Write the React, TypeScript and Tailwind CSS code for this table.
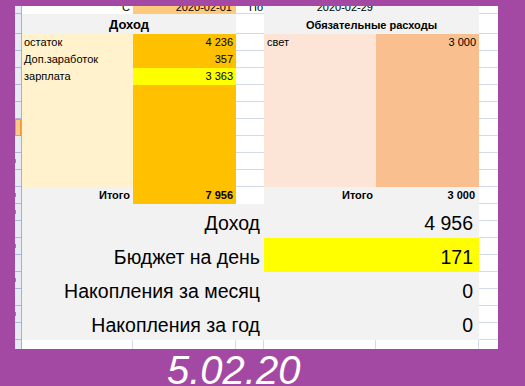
import React from "react";

const G = "border-[#d4dbe8]";

function RowHeader() {
  const rows: number[] = [];
  for (let i = 0; i < 18; i++) rows.push(i);
  return (
    <div className="w-[7px] h-full bg-[#e8eaf4] border-r border-[#9fb4d0] flex flex-col">
      <div className="h-[8px] border-b border-[#a9bbd4] shrink-0" />
      <div className="h-[20px] border-b border-[#a9bbd4] shrink-0" />
      {rows.map((i) =>
        i === 5 ? (
          <div key={i} className="h-[17px] shrink-0 bg-[#fcc98a] border border-[#f29a3a]" />
        ) : (
          <div key={i} className="h-[17px] shrink-0 border-b border-[#a9bbd4] relative">
            {(i === 7 || i === 9 || i === 10 || i === 12 || i === 14 || i === 16) && (
              <div className="absolute left-0 top-[6px] w-[1px] h-[4px] bg-[#5b8ee6]" />
            )}
          </div>
        )
      )}
      <div className="h-[9px] shrink-0" />
    </div>
  );
}

function DataRow({
  label,
  value,
  valueBg,
  right,
  rightValue,
}: {
  label?: string;
  value?: string;
  valueBg?: string;
  right?: string;
  rightValue?: string;
}) {
  return (
    <div className="flex h-[17px] text-[11px] leading-[17px] text-black">
      <div className="w-[111px] bg-[#fff2cc] pl-[2px] whitespace-nowrap">{label}</div>
      <div className={`w-[103px] ${valueBg === "y" ? "bg-[#ffff00]" : "bg-[#ffc000]"} pr-[3px] text-right`}>{value}</div>
      <div className={`w-[28px] bg-white border-b ${G}`} />
      <div className="w-[112px] bg-[#fce4d6] pl-[3px]">{right}</div>
      <div className="w-[103px] bg-[#fabf8f] pr-[3px] text-right">{rightValue}</div>
      <div className={`w-[19px] bg-white border-b ${G}`} />
    </div>
  );
}

function BigRow({ label, value, yellow }: { label: string; value: string; yellow?: boolean }) {
  return (
    <div className="flex h-[34px] text-[19.5px] leading-[22px] text-black">
      <div className="w-[242px] bg-[#f2f2f2] flex items-end justify-end pr-[4px] pb-[4px] whitespace-nowrap">
        {label}
      </div>
      <div
        className={`w-[215px] ${yellow ? "bg-[#ffff00]" : "bg-[#f2f2f2]"} flex items-end justify-end pr-[6px] pb-[4px]`}
      >
        {value}
      </div>
      <div className="w-[19px] bg-white flex flex-col">
        <div className={`h-[17px] border-b ${G}`} />
        <div className={`h-[17px] border-b ${G}`} />
      </div>
    </div>
  );
}

export default function App() {
  const empties: number[] = [0, 1, 2, 3, 4, 5];
  return (
    <div className="w-[525px] h-[386px] bg-[#a349a4] overflow-hidden flex flex-col font-['Liberation_Sans',Arial,sans-serif]">
      <div className="mt-[6px] ml-[15px] w-[483px] h-[343px] bg-white flex shrink-0">
        <RowHeader />
        <div className="w-[476px] flex flex-col">
          {/* row 1 */}
          <div className="flex h-[8px] text-[11px] leading-[11px] text-black overflow-hidden">
            <div className="w-[111px] bg-white flex items-end justify-end pr-[3px] pb-[1px]">С</div>
            <div className="w-[103px] bg-[#fdc97c] flex items-end justify-end pr-[4px] pb-[1px]">2020-02-01</div>
            <div className={`w-[28px] bg-white border-b ${G} flex items-end justify-end pr-[1px]`}>По</div>
            <div className="w-[112px] bg-[#f2f2f2] flex items-end justify-end pr-[3px] pb-[1px]">2020-02-29</div>
            <div className="w-[103px] bg-[#f2f2f2]" />
            <div className={`w-[19px] bg-white border-b ${G}`} />
          </div>
          {/* row 2 headers */}
          <div className="flex h-[20px] text-black font-bold">
            <div className="w-[214px] bg-[#f2f2f2] flex items-end justify-center pb-[2px] text-[13px] leading-[15px]">
              Доход
            </div>
            <div className={`w-[28px] bg-white border-b ${G}`} />
            <div className="w-[215px] bg-[#f2f2f2] flex items-end justify-center pb-[2px] text-[11px] leading-[13px]">
              Обязательные расходы
            </div>
            <div className={`w-[19px] bg-white border-b ${G}`} />
          </div>
          <DataRow label="остаток" value="4 236" right="свет" rightValue="3 000" />
          <DataRow label="Доп.заработок" value="357" />
          <DataRow label="зарплата" value="3 363" valueBg="y" />
          {empties.map((i) => (
            <DataRow key={i} />
          ))}
          {/* totals */}
          <div className="flex h-[17px] text-[11px] leading-[17px] text-black font-bold">
            <div className="w-[111px] bg-[#f2f2f2] pr-[3px] text-right">Итого</div>
            <div className="w-[103px] bg-[#ffc000] pr-[3px] text-right">7 956</div>
            <div className="w-[28px] bg-white" />
            <div className="w-[112px] bg-[#f2f2f2] pr-[3px] text-right">Итого</div>
            <div className="w-[103px] bg-[#f2f2f2] pr-[4px] text-right">3 000</div>
            <div className={`w-[19px] bg-white border-b ${G}`} />
          </div>
          <BigRow label="Доход" value="4 956" />
          <BigRow label="Бюджет на день" value="171" yellow />
          <BigRow label="Накопления за месяц" value="0" />
          <BigRow label="Накопления за год" value="0" />
          {/* last partial row */}
          <div className="flex h-[9px]">
            <div className={`w-[111px] bg-white border-r ${G}`} />
            <div className={`w-[103px] bg-white border-r ${G}`} />
            <div className={`w-[28px] bg-white border-r ${G}`} />
            <div className={`w-[112px] bg-white border-r ${G}`} />
            <div className={`w-[103px] bg-white border-r ${G}`} />
            <div className="w-[19px] bg-white" />
          </div>
        </div>
      </div>
      <div className="mt-[1px] pl-[167px] text-[40px] leading-[40px] italic text-white whitespace-nowrap">
        5.02.20
      </div>
    </div>
  );
}
